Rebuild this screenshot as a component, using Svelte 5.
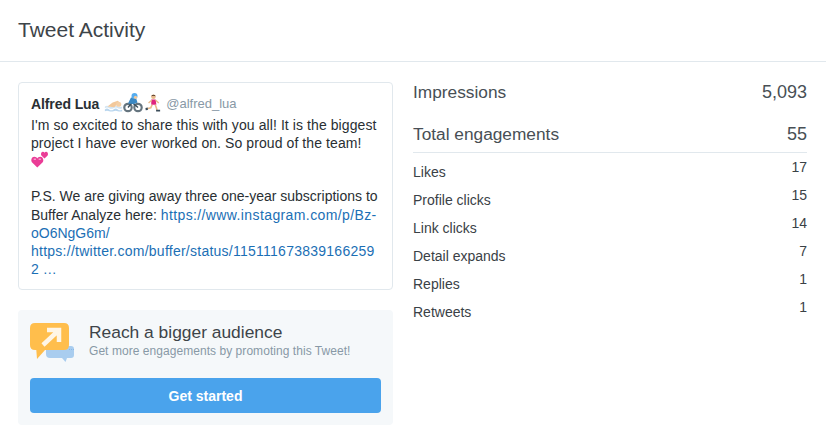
<script>
  const rows = [
    { label: 'Likes', value: '17' },
    { label: 'Profile clicks', value: '15' },
    { label: 'Link clicks', value: '14' },
    { label: 'Detail expands', value: '7' },
    { label: 'Replies', value: '1' },
    { label: 'Retweets', value: '1' }
  ];
</script>

<div class="page">
  <header class="head"><h1>Tweet Activity</h1></header>
  <main class="body">
    <section class="left">
      <article class="tweet">
        <div class="who">
          <strong>Alfred Lua</strong>
          <span class="emojis">
            <svg class="e swim" viewBox="0 0 22 14" aria-hidden="true">
              <path d="M1 11q2.500-2 5 0t5 0 5 0 5 0v2q-2.500 1-5 0t-5 0-5 0-5 0z" fill="#b9d6ee"/>
              <path d="M1 7.500q2.500-1.500 5 0t5 0 5 0 5 0v2q-2.500 1.300-5 0t-5 0-5 0-5 0z" fill="#d3e5f3"/>
              <path d="M4 7.500 10 3l6-2 2 2-4 3-2 2.500z" fill="#f2c89b"/>
              <circle cx="17" cy="5" r="3" fill="#f4cfa6"/>
            </svg>
            <svg class="e bike" viewBox="0 0 20 20" aria-hidden="true">
              <circle cx="5" cy="15" r="3.700" fill="none" stroke="#66757f" stroke-width="2.200"/>
              <circle cx="15" cy="15" r="3.700" fill="none" stroke="#66757f" stroke-width="2.200"/>
              <path d="M5 15 9 10l6 5" fill="none" stroke="#3b4d5a" stroke-width="1.400"/>
              <path d="M5 11 8 5l5 .5 1.500 4.500-3.500 1.500z" fill="#3b88c3"/>
              <circle cx="11.500" cy="3.500" r="3" fill="#55acee"/>
              <circle cx="12.500" cy="4.800" r="1.600" fill="#f2c89b"/>
            </svg>
            <svg class="e run" viewBox="0 0 18 20" aria-hidden="true">
              <circle cx="9.500" cy="3" r="2.600" fill="#e8b98a"/>
              <path d="M7 2.500a2.600 2.600 0 0 1 5 0l-2.500-.6z" fill="#4a3426"/>
              <path d="M7 6h5l.8 6H7z" fill="#e0247e"/>
              <path d="M7.500 7 4 10M12 7l3.500 3" stroke="#e8b98a" stroke-width="1.600" fill="none"/>
              <path d="M8 12 6.500 15.500 2 16.500M11.500 12l1.500 4 .5 2.500" stroke="#e8b98a" stroke-width="1.800" fill="none"/>
              <path d="M.5 15.500l2.500-.3.300 2.800-2.500.2zM12.500 17.500h4.500v2h-4.500z" fill="#3b4d5a"/>
            </svg>
          </span>
          <span class="handle">@alfred_lua</span>
        </div>
        <p class="intro">I'm so excited to share this with you all! It is the biggest project I have ever worked on. So proud of the team!</p>
        <svg class="hearts" viewBox="0 0 20 18" aria-hidden="true">
          <path d="M7 18 1 12C-.500 10 .5 6 3.800 6c1.500 0 2.700.8 3.200 2 .5-1.200 1.700-2 3.200-2 3.300 0 4.300 4 2.800 6z" fill="#ea3c96"/>
          <path d="M15 8 11.500 4.500C10.500 3 11.500.5 13.300.5c.8 0 1.400.4 1.700 1 .3-.6 1-1 1.700-1 1.800 0 2.800 2.500 1.800 4z" fill="#ea3c96"/>
          <path d="M3 8h2.500v1.500H3zM8.500 8H11v1.500H8.500z" fill="#f59ccb"/>
        </svg>
        <p class="gap">P.S. We are giving away three one-year subscriptions to Buffer Analyze here: <span class="link insta">https://www.instagram.com/p/Bz-</span><br><span class="link">oO6NgG6m/</span><br><span class="link tw">https://twitter.com/buffer/status/115111673839166259</span><br><span class="link">2 …</span></p>
      </article>

      <aside class="promo">
        <div class="promo-top">
          <svg class="promo-icon" viewBox="0 0 44 40" aria-hidden="true">
            <path d="M16 23h25q3 0 3 3v6q0 3-3 3h-4l-1.500 4-3.500-4H20q-4 0-4-4z" fill="#a9cdef"/>
            <path d="M39 26.500h5" stroke="#7fb4e6" stroke-width=".8" stroke-dasharray="1 1"/>
            <path d="M5 0h29q5 0 5 5v17q0 5-5 5H15L7 36l-.7-9H5q-5 0-5-5V5q0-5 5-5z" fill="#ffbe4c"/>
            <path d="M13 22 28 8M17 7h12v12" fill="none" stroke="#fff6e6" stroke-width="4.500"/>
          </svg>
          <div class="promo-text">
            <h2>Reach a bigger audience</h2>
            <p>Get more engagements by promoting this Tweet!</p>
          </div>
        </div>
        <button type="button">Get started</button>
      </aside>
    </section>

    <section class="right">
      <div class="big"><span class="lab">Impressions</span><span>5,093</span></div>
      <div class="big total"><span class="lab">Total engagements</span><span>55</span></div>
      <ul>
        {#each rows as r}
          <li><span>{r.label}</span><span class="val">{r.value}</span></li>
        {/each}
      </ul>
    </section>
  </main>
</div>

<style>
  :global(body) { margin: 0; background: #fff; }
  .page { width: 826px; height: 444px; overflow: hidden; font-family: "Liberation Sans", Arial, sans-serif; color: #292f33; }
  .head { height: 61px; border-bottom: 1px solid #e1e8ed; display: flex; align-items: center; padding-left: 18px; }
  h1 { margin: 0; font-size: 21px; font-weight: 400; color: #3d4449; position: relative; top: -1px; }
  .body { display: flex; padding: 20px 19px 0 18px; gap: 20px; }
  .left { width: 375px; flex: none; display: flex; flex-direction: column; gap: 20px; }
  .tweet { height: 208px; box-sizing: border-box; border: 1px solid #e1e8ed; border-radius: 4px; padding: 11px 12px 0; font-size: 14px; line-height: 18.200px; }
  .who { display: flex; align-items: center; height: 20px; }
  .who strong { font-weight: 700; letter-spacing: -.1px; }
  .emojis { display: flex; align-items: center; margin-left: 5px; }
  .e { display: block; }
  .swim { width: 19px; height: 14px; margin-top: 3px; }
  .bike { width: 20px; height: 21px; margin-top: -3px; }
  .run { width: 16px; height: 20px; margin-top: -3px; margin-left: 2px; }
  .handle { font-size: 13px; color: #8899a6; margin-left: 5px; }
  p { margin: 0; }
  .intro { margin-top: 2px; letter-spacing: .085px; }
  .hearts { display: block; width: 18px; height: 17px; margin-top: -1px; }
  .gap { margin-top: 19px; }
  .link { color: #1b6fb5; }
  .insta { letter-spacing: .39px; }
  .tw { letter-spacing: .25px; }
  .promo { height: 115px; box-sizing: border-box; background: #f5f8fa; border-radius: 4px; padding: 12px 12px 0; }
  .promo-top { display: flex; height: 56px; }
  .promo-icon { width: 44px; height: 40px; flex: none; margin-top: 1px; }
  .promo-text { margin-left: 15px; }
  h2 { margin: 0; font-size: 17.400px; font-weight: 400; line-height: 21px; color: #3d4449; }
  .promo-text p { font-size: 12px; line-height: 15px; color: #8899a6; margin-top: 1px; letter-spacing: .05px; }
  button { display: block; width: 100%; height: 35px; border: 0; border-radius: 4px; background: #4aa3ec; color: #fff; font: 700 14px "Liberation Sans", Arial, sans-serif; }
  .right { width: 394px; flex: none; }
  .big { display: flex; justify-content: space-between; font-size: 18px; line-height: 20px; color: #484f55; }
  .lab { font-size: 17.300px; }
  .big.total { margin-top: 22px; padding-bottom: 8px; border-bottom: 1px solid #e1e8ed; }
  ul { list-style: none; margin: 0; padding: 0; }
  li { display: flex; justify-content: space-between; height: 28px; font-size: 14px; padding-top: 10px; box-sizing: border-box; line-height: 18px; color: #3a4146; }
  .val { margin-top: -5px; }
</style>
